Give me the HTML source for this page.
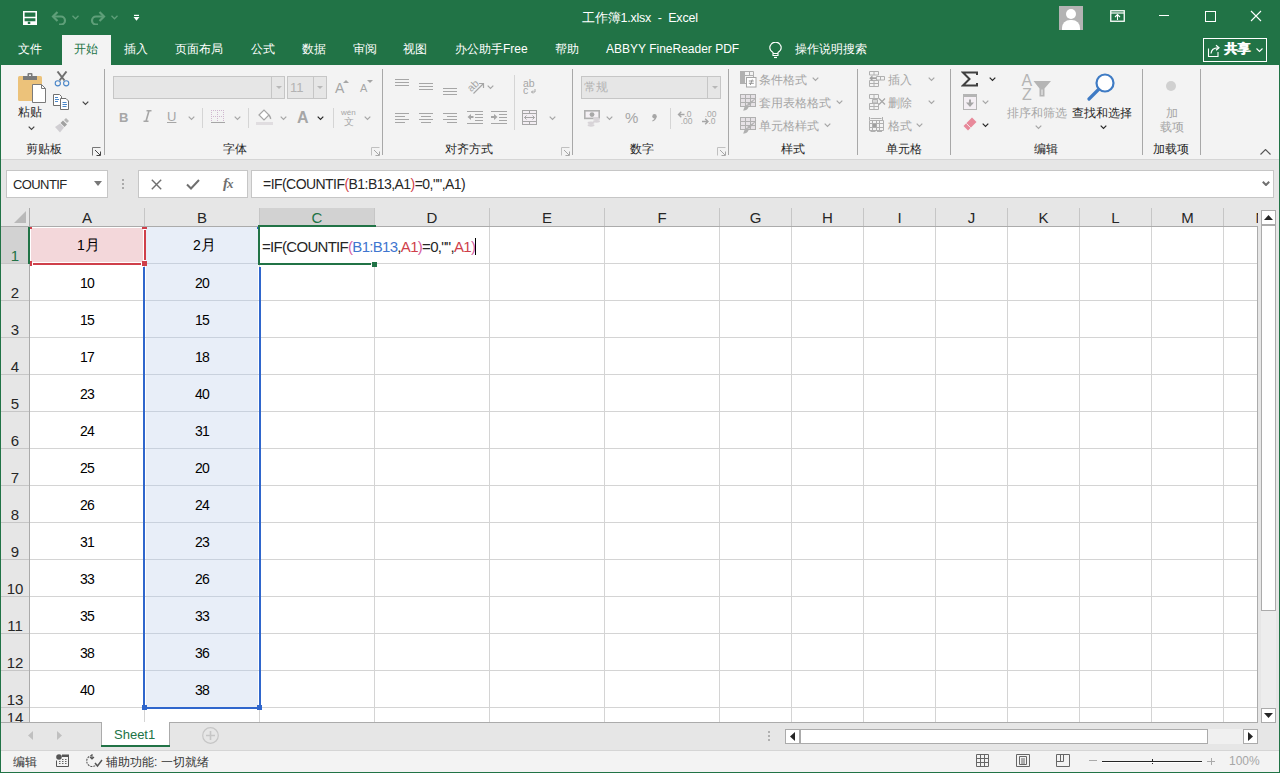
<!DOCTYPE html><html><head><meta charset="utf-8"><style>
*{margin:0;padding:0;box-sizing:border-box}
html,body{width:1280px;height:773px;overflow:hidden;background:#217346;font-family:"Liberation Sans",sans-serif;position:relative}
div,span,svg{position:absolute}
.nw{white-space:nowrap}
.tab{color:#fff;font-size:12px;top:42px;line-height:14px;white-space:nowrap}
.gl{color:#262626;font-size:12px;line-height:14px;white-space:nowrap;top:142px}
.dis{color:#a6a6a6}
.sep{width:1px;background:#c8c8c8}
.hdr{background:#e6e6e6;color:#262626;font-size:15px;text-align:center;line-height:19px}
.cellt{font-size:14px;color:#000;text-align:center;line-height:15px;white-space:nowrap;letter-spacing:-0.8px}
</style></head><body>
<div style="left:0;top:0;width:1280px;height:65px;background:#217346"></div>
<svg style="left:23px;top:11px" width="14" height="14" viewBox="0 0 14 14"><path d="M0 0h14v14H0z M1.6 1.6v4.2h10.8V1.6z M1.6 7.2v3h10.8v-3z M4.8 10.8v2.2h2.5v-2.2z" fill="#fff" fill-rule="evenodd"/></svg>
<svg style="left:51px;top:10px" width="16" height="15" viewBox="0 0 16 15"><path d="M2.5 6.5h7.5a4 4 0 0 1 0 8H8" fill="none" stroke="#5f9f79" stroke-width="2.2"/><path d="M6.5 2L2 6.5l4.5 4.5" fill="none" stroke="#5f9f79" stroke-width="2.2"/></svg>
<svg style="left:72px;top:15px" width="7" height="5" viewBox="0 0 7 5"><path d="M0.5 0.8l3 3 3-3" fill="none" stroke="#5f9f79" stroke-width="1.3"/></svg>
<svg style="left:90px;top:10px" width="16" height="15" viewBox="0 0 16 15"><path d="M13.5 6.5H6a4 4 0 0 0 0 8h2" fill="none" stroke="#5f9f79" stroke-width="2.2"/><path d="M9.5 2L14 6.5 9.5 11" fill="none" stroke="#5f9f79" stroke-width="2.2"/></svg>
<svg style="left:111px;top:15px" width="7" height="5" viewBox="0 0 7 5"><path d="M0.5 0.8l3 3 3-3" fill="none" stroke="#5f9f79" stroke-width="1.3"/></svg>
<svg style="left:133px;top:14px" width="7" height="8" viewBox="0 0 7 8"><rect x="1" y="0.8" width="5" height="1.2" fill="#fff"/><path d="M0.5 3h6l-3 3.8z" fill="#fff"/></svg>
<div class="nw" style="left:582px;top:11px;color:#fff;font-size:12.5px;line-height:15px;letter-spacing:-0.2px">工作簿1.xlsx&nbsp;&nbsp;-&nbsp;&nbsp;Excel</div>
<div style="left:1059px;top:6px;width:24px;height:24px;background:#b3b3b3;overflow:hidden"><div style="left:7px;top:3px;width:10px;height:10px;border-radius:50%;background:#fff"></div><div style="left:3px;top:14px;width:18px;height:14px;border-radius:8px 8px 0 0;background:#fff"></div></div>
<svg style="left:1110px;top:10px" width="15" height="12" viewBox="0 0 15 12"><rect x="0.75" y="0.75" width="13.5" height="10.5" fill="none" stroke="#fff" stroke-width="1.3"/><path d="M1 3h13" stroke="#fff" stroke-width="1.2"/><path d="M7.5 10V5M5 7l2.5-2.5L10 7" fill="none" stroke="#fff" stroke-width="1.1"/></svg>
<div style="left:1159px;top:15px;width:10px;height:1px;background:#fff"></div>
<div style="left:1205px;top:11px;width:11px;height:11px;border:1px solid #fff"></div>
<svg style="left:1250px;top:10px" width="12" height="12" viewBox="0 0 12 12"><path d="M1 1l10 10M11 1L1 11" stroke="#fff" stroke-width="1.1"/></svg>
<div style="left:62px;top:35px;width:49px;height:30px;background:#f3f3f3"></div>
<div class="tab" style="left:18px">文件</div>
<div class="tab" style="left:124px">插入</div>
<div class="tab" style="left:175px">页面布局</div>
<div class="tab" style="left:251px">公式</div>
<div class="tab" style="left:302px">数据</div>
<div class="tab" style="left:353px">审阅</div>
<div class="tab" style="left:403px">视图</div>
<div class="tab" style="left:455px">办公助手Free</div>
<div class="tab" style="left:555px">帮助</div>
<div class="tab" style="left:606px">ABBYY FineReader PDF</div>
<div class="tab" style="left:795px">操作说明搜索</div>
<div class="tab" style="left:74px;color:#217346">开始</div>
<svg style="left:769px;top:42px" width="13" height="17" viewBox="0 0 13 17"><path d="M4 10.5C2 9.3 0.8 7.6 0.8 5.8a5.7 5.7 0 0 1 11.4 0c0 1.8-1.2 3.5-3.2 4.7v3H4z" fill="none" stroke="#fff" stroke-width="1.1"/><path d="M4 11.5h5" stroke="#fff" stroke-width="1"/><path d="M5 15.5h3" stroke="#fff" stroke-width="1.2"/></svg>
<div style="left:1203px;top:38px;width:64px;height:24px;border:1px solid #fff"></div>
<svg style="left:1207px;top:43px" width="14" height="14" viewBox="0 0 14 14"><path d="M1.5 5.5V13.5H11V9" fill="none" stroke="#fff" stroke-width="1.1"/><path d="M4 10.5C4.3 7 6.5 4.8 11 4.8" fill="none" stroke="#fff" stroke-width="1.2"/><path d="M9 2.3l3 2.5-3 2.5" fill="none" stroke="#fff" stroke-width="1.2"/></svg>
<div class="nw" style="left:1224px;top:41px;color:#fff;font-size:13px;font-weight:bold;line-height:15px;text-shadow:0.5px 0 0 #fff">共享</div>
<svg style="left:1256px;top:48px" width="7" height="5" viewBox="0 0 7 5"><path d="M0.5 0.5l3 3 3-3" fill="none" stroke="#fff" stroke-width="1.1"/></svg>
<div style="left:1px;top:65px;width:1278px;height:95px;background:#f3f3f3"></div>
<div style="left:1px;top:159px;width:1278px;height:1px;background:#d5d5d5"></div>
<div class="sep" style="left:104px;top:69px;height:86px;background:#a8a8a8"></div>
<div class="sep" style="left:382px;top:69px;height:86px;background:#a8a8a8"></div>
<div class="sep" style="left:572px;top:69px;height:86px;background:#a8a8a8"></div>
<div class="sep" style="left:728px;top:69px;height:86px;background:#a8a8a8"></div>
<div class="sep" style="left:857px;top:69px;height:86px;background:#a8a8a8"></div>
<div class="sep" style="left:950px;top:69px;height:86px;background:#a8a8a8"></div>
<div class="sep" style="left:1142px;top:69px;height:86px;background:#a8a8a8"></div>
<div class="sep" style="left:1200px;top:69px;height:86px;background:#a8a8a8"></div>
<div class="gl" style="left:26px">剪贴板</div>
<div class="gl" style="left:223px">字体</div>
<div class="gl" style="left:445px">对齐方式</div>
<div class="gl" style="left:630px">数字</div>
<div class="gl" style="left:781px">样式</div>
<div class="gl" style="left:886px">单元格</div>
<div class="gl" style="left:1034px">编辑</div>
<div class="gl" style="left:1153px">加载项</div>
<svg style="left:92px;top:147px" width="9" height="9" viewBox="0 0 9 9"><path d="M0.5 8.5V0.5h8" fill="none" stroke="#777" stroke-width="1"/><path d="M3 3l5 5M4.5 8.5h4v-4" fill="none" stroke="#444" stroke-width="1"/></svg>
<svg style="left:371px;top:147px" width="9" height="9" viewBox="0 0 9 9"><path d="M0.5 8.5V0.5h8" fill="none" stroke="#c0c0c0" stroke-width="1"/><path d="M3 3l5 5M4.5 8.5h4v-4" fill="none" stroke="#a8a8a8" stroke-width="1"/></svg>
<svg style="left:561px;top:147px" width="9" height="9" viewBox="0 0 9 9"><path d="M0.5 8.5V0.5h8" fill="none" stroke="#c0c0c0" stroke-width="1"/><path d="M3 3l5 5M4.5 8.5h4v-4" fill="none" stroke="#a8a8a8" stroke-width="1"/></svg>
<svg style="left:717px;top:147px" width="9" height="9" viewBox="0 0 9 9"><path d="M0.5 8.5V0.5h8" fill="none" stroke="#c0c0c0" stroke-width="1"/><path d="M3 3l5 5M4.5 8.5h4v-4" fill="none" stroke="#a8a8a8" stroke-width="1"/></svg>
<svg style="left:17px;top:72px" width="30" height="32" viewBox="0 0 30 32"><rect x="1" y="4" width="24" height="25" rx="1.5" fill="#ecc27a"/><path d="M6 4h14v4H6z" fill="#7a7a7a"/><rect x="10.5" y="1" width="5" height="4" rx="1" fill="#7a7a7a"/><rect x="12" y="2.5" width="2" height="1.5" fill="#f3f3f3"/><path d="M15.5 12.5h9l4 4v14h-13z" fill="#fff" stroke="#7a7a7a" stroke-width="1"/><path d="M24.5 12.5v4h4" fill="none" stroke="#7a7a7a" stroke-width="1"/></svg>
<div class="nw" style="left:18px;top:105px;font-size:12px;color:#262626;line-height:14px">粘贴</div>
<svg style="left:28px;top:126px" width="7" height="5" viewBox="0 0 7 5"><path d="M0.7 0.7l2.8 2.8 2.8-2.8" fill="none" stroke="#444" stroke-width="1.2"/></svg>
<svg style="left:54px;top:71px" width="16" height="16" viewBox="0 0 16 16"><path d="M3.5 0.5l7 9M12.5 0.5l-7 9" stroke="#6f6f6f" stroke-width="2"/><circle cx="3.8" cy="12.3" r="2.6" fill="none" stroke="#4a86c8" stroke-width="1.1"/><circle cx="12.2" cy="12.3" r="2.6" fill="none" stroke="#4a86c8" stroke-width="1.1"/></svg>
<svg style="left:53px;top:94px" width="17" height="16" viewBox="0 0 17 16"><path d="M0.5 0.5h6l2 2v9h-8z" fill="#fff" stroke="#6f6f6f" stroke-width="1"/><path d="M2 3.5h3M2 5.5h4M2 7.5h3" stroke="#4a86c8" stroke-width="1"/><path d="M7.5 4.5h5.5l2.5 2.5v8.5h-8z" fill="#fff" stroke="#6f6f6f" stroke-width="1"/><path d="M9.5 8.5h4M9.5 10.5h4.5M9.5 12.5h4" stroke="#4a86c8" stroke-width="1"/></svg>
<svg style="left:82px;top:101px" width="7" height="5" viewBox="0 0 7 5"><path d="M0.7 0.7l2.8 2.8 2.8-2.8" fill="none" stroke="#444" stroke-width="1.2"/></svg>
<svg style="left:54px;top:117px" width="17" height="16" viewBox="0 0 17 16"><path d="M12 1l3 3-2 2-3-3z" fill="#b5b5b5"/><path d="M9 3.5l4 4-2.5 2.5-4-4z" fill="#a0a0a0"/><path d="M6 6.5l4 4-4 5L1 10z" fill="#d0ced2"/></svg>
<div style="left:113px;top:76px;width:172px;height:23px;background:#e6e6e6;border:1px solid #c6c6c6"></div>
<div style="left:271px;top:77px;width:1px;height:21px;background:#c6c6c6"></div>
<svg style="left:276px;top:86px" width="6" height="3" viewBox="0 0 6 3"><path d="M0 0h6L3 3z" fill="#b8b8b8"/></svg>
<div style="left:287px;top:76px;width:40px;height:23px;background:#e6e6e6;border:1px solid #c6c6c6"></div>
<div style="left:313px;top:77px;width:1px;height:21px;background:#c6c6c6"></div>
<svg style="left:317px;top:86px" width="6" height="3" viewBox="0 0 6 3"><path d="M0 0h6L3 3z" fill="#b8b8b8"/></svg>
<div class="nw" style="left:290px;top:80px;font-size:13px;color:#b3b3b3;line-height:15px">11</div>
<div class="nw" style="left:335px;top:80px;font-size:14px;color:#a6a6a6;line-height:16px">A</div>
<svg style="left:343px;top:80px" width="6" height="3" viewBox="0 0 6 3"><path d="M0 3h6L3 0z" fill="#a6a6a6"/></svg>
<div class="nw" style="left:360px;top:82px;font-size:11px;color:#a6a6a6;line-height:13px">A</div>
<svg style="left:367px;top:80px" width="6" height="3" viewBox="0 0 6 3"><path d="M0 0h6L3 3z" fill="#a6a6a6"/></svg>
<div class="nw" style="left:119px;top:110px;font-size:13px;font-weight:bold;color:#a6a6a6;line-height:15px">B</div>
<svg style="left:143px;top:110px" width="9" height="12" viewBox="0 0 9 12"><path d="M3.5 0.8h5M0.5 11.2h5M6 0.8L3 11.2" fill="none" stroke="#a6a6a6" stroke-width="1.6"/></svg>
<div class="nw" style="left:167px;top:109px;font-size:13px;color:#a6a6a6;line-height:15px;text-decoration:underline">U</div>
<svg style="left:188px;top:116px" width="7" height="5" viewBox="0 0 7 5"><path d="M0.7 0.7l2.8 2.8 2.8-2.8" fill="none" stroke="#a6a6a6" stroke-width="1.2"/></svg>
<div class="sep" style="left:202px;top:108px;height:20px;background:#d5d5d5"></div>
<svg style="left:211px;top:110px" width="14" height="14" viewBox="0 0 14 14"><g fill="#d0b8d0"><rect x="0" y="0" width="1" height="1"/><rect x="2" y="0" width="1" height="1"/><rect x="4" y="0" width="1" height="1"/><rect x="6" y="0" width="1" height="1"/><rect x="8" y="0" width="1" height="1"/><rect x="10" y="0" width="1" height="1"/><rect x="12" y="0" width="1" height="1"/><rect x="0" y="6" width="1" height="1"/><rect x="2" y="6" width="1" height="1"/><rect x="4" y="6" width="1" height="1"/><rect x="6" y="6" width="1" height="1"/><rect x="8" y="6" width="1" height="1"/><rect x="10" y="6" width="1" height="1"/><rect x="12" y="6" width="1" height="1"/><rect x="0" y="2" width="1" height="1"/><rect x="0" y="4" width="1" height="1"/><rect x="0" y="8" width="1" height="1"/><rect x="0" y="10" width="1" height="1"/><rect x="6" y="2" width="1" height="1"/><rect x="6" y="4" width="1" height="1"/><rect x="6" y="8" width="1" height="1"/><rect x="6" y="10" width="1" height="1"/><rect x="12" y="2" width="1" height="1"/><rect x="12" y="4" width="1" height="1"/><rect x="12" y="8" width="1" height="1"/><rect x="12" y="10" width="1" height="1"/></g><path d="M0 12.5h14" stroke="#a6a6a6" stroke-width="1"/></svg>
<svg style="left:234px;top:116px" width="7" height="5" viewBox="0 0 7 5"><path d="M0.7 0.7l2.8 2.8 2.8-2.8" fill="none" stroke="#a6a6a6" stroke-width="1.2"/></svg>
<div class="sep" style="left:248px;top:108px;height:20px;background:#d5d5d5"></div>
<svg style="left:256px;top:108px" width="17" height="18" viewBox="0 0 17 18"><path d="M3 7l5-5 5 5-5 5z" fill="#fff" stroke="#a6a6a6" stroke-width="1.2"/><path d="M13 7c1 2 2 3 1.5 4" stroke="#a6a6a6" stroke-width="1.5" fill="none"/><rect x="0" y="14" width="17" height="3" fill="#e0dde0"/></svg>
<svg style="left:280px;top:116px" width="7" height="5" viewBox="0 0 7 5"><path d="M0.7 0.7l2.8 2.8 2.8-2.8" fill="none" stroke="#a6a6a6" stroke-width="1.2"/></svg>
<div class="nw" style="left:297px;top:109px;font-size:16px;font-weight:bold;color:#a6a6a6;line-height:18px">A</div>
<svg style="left:317px;top:116px" width="7" height="5" viewBox="0 0 7 5"><path d="M0.7 0.7l2.8 2.8 2.8-2.8" fill="none" stroke="#262626" stroke-width="1.2"/></svg>
<div class="sep" style="left:333px;top:108px;height:20px;background:#d5d5d5"></div>
<div class="nw" style="left:341px;top:108px;font-size:8px;color:#a6a6a6;line-height:9px">wén</div>
<div class="nw" style="left:344px;top:116px;font-size:10px;color:#a6a6a6;line-height:11px">文</div>
<svg style="left:364px;top:116px" width="7" height="5" viewBox="0 0 7 5"><path d="M0.7 0.7l2.8 2.8 2.8-2.8" fill="none" stroke="#a6a6a6" stroke-width="1.2"/></svg>
<div style="left:395px;top:79px;width:14px;height:1px;background:#a6a6a6"></div><div style="left:395px;top:82px;width:14px;height:1px;background:#a6a6a6"></div><div style="left:395px;top:85px;width:14px;height:1px;background:#a6a6a6"></div>
<div style="left:419px;top:83px;width:14px;height:1px;background:#a6a6a6"></div><div style="left:419px;top:86px;width:14px;height:1px;background:#a6a6a6"></div><div style="left:419px;top:89px;width:14px;height:1px;background:#a6a6a6"></div>
<div style="left:443px;top:88px;width:14px;height:1px;background:#a6a6a6"></div><div style="left:443px;top:91px;width:14px;height:1px;background:#a6a6a6"></div><div style="left:443px;top:94px;width:14px;height:1px;background:#a6a6a6"></div>
<svg style="left:466px;top:78px" width="19" height="18" viewBox="0 0 19 18"><text x="1" y="12" font-size="10.5" fill="#a6a6a6" transform="rotate(-45 6 8)" font-family="Liberation Sans">ab</text><path d="M7.5 15.5L17 6M13 5.5h4.5V10" fill="none" stroke="#a6a6a6" stroke-width="1.2"/></svg>
<svg style="left:487px;top:85px" width="7" height="5" viewBox="0 0 7 5"><path d="M0.7 0.7l2.8 2.8 2.8-2.8" fill="none" stroke="#a6a6a6" stroke-width="1.2"/></svg>
<div class="sep" style="left:514px;top:75px;height:55px;background:#d5d5d5"></div>
<svg style="left:523px;top:78px" width="16" height="17" viewBox="0 0 16 17"><text x="0" y="9" font-size="10.5" fill="#a6a6a6" font-family="Liberation Sans">ab</text><text x="0" y="16" font-size="10.5" fill="#a6a6a6" font-family="Liberation Sans">c</text><path d="M12 11v3H8.5M10 12.5l-1.5 1.5 1.5 1.5" fill="none" stroke="#a6a6a6" stroke-width="1"/></svg>
<div style="left:395px;top:113px;width:14px;height:1px;background:#a6a6a6"></div><div style="left:395px;top:116px;width:10px;height:1px;background:#a6a6a6"></div><div style="left:395px;top:119px;width:14px;height:1px;background:#a6a6a6"></div><div style="left:395px;top:122px;width:10px;height:1px;background:#a6a6a6"></div>
<div style="left:419px;top:113px;width:14px;height:1px;background:#a6a6a6"></div><div style="left:421px;top:116px;width:10px;height:1px;background:#a6a6a6"></div><div style="left:419px;top:119px;width:14px;height:1px;background:#a6a6a6"></div><div style="left:421px;top:122px;width:10px;height:1px;background:#a6a6a6"></div>
<div style="left:443px;top:113px;width:14px;height:1px;background:#a6a6a6"></div><div style="left:447px;top:116px;width:10px;height:1px;background:#a6a6a6"></div><div style="left:443px;top:119px;width:14px;height:1px;background:#a6a6a6"></div><div style="left:447px;top:122px;width:10px;height:1px;background:#a6a6a6"></div>
<svg style="left:467px;top:111px" width="16" height="14" viewBox="0 0 16 14"><path d="M0 0.5h16M8 3.5h8M8 6.5h8M8 9.5h8M0 12.5h16" stroke="#a6a6a6" stroke-width="1"/><path d="M6.5 6h-4" stroke="#a6a6a6" stroke-width="2"/><path d="M4 3L0.5 6 4 9z" fill="#a6a6a6"/></svg>
<svg style="left:491px;top:111px" width="16" height="14" viewBox="0 0 16 14"><path d="M0 0.5h16M8 3.5h8M8 6.5h8M8 9.5h8M0 12.5h16" stroke="#a6a6a6" stroke-width="1"/><path d="M0 6h4" stroke="#a6a6a6" stroke-width="2"/><path d="M3 3l3.5 3L3 9z" fill="#a6a6a6"/></svg>
<svg style="left:522px;top:110px" width="15" height="15" viewBox="0 0 15 15"><rect x="0.5" y="0.5" width="14" height="14" fill="#f3eef3" stroke="#a6a6a6" stroke-width="1"/><path d="M0.5 3.5h14M0.5 11.5h14M7.5 0.5v3M7.5 11.5v3" stroke="#a6a6a6" stroke-width="1"/><path d="M2.5 7.5h10M4.5 5.5l-2 2 2 2M10.5 5.5l2 2-2 2" fill="none" stroke="#a6a6a6" stroke-width="1"/></svg>
<svg style="left:549px;top:116px" width="7" height="5" viewBox="0 0 7 5"><path d="M0.7 0.7l2.8 2.8 2.8-2.8" fill="none" stroke="#a6a6a6" stroke-width="1.2"/></svg>
<div style="left:581px;top:76px;width:140px;height:23px;background:#e6e6e6;border:1px solid #c6c6c6"></div>
<div style="left:707px;top:77px;width:1px;height:21px;background:#c6c6c6"></div>
<svg style="left:712px;top:86px" width="6" height="3" viewBox="0 0 6 3"><path d="M0 0h6L3 3z" fill="#b8b8b8"/></svg>
<div class="nw" style="left:584px;top:80px;font-size:12px;color:#b3b3b3;line-height:14px">常规</div>
<svg style="left:584px;top:110px" width="18" height="18" viewBox="0 0 18 18"><rect x="0.8" y="0.8" width="14.4" height="7.6" fill="#f4f0f4" stroke="#b0b0b0" stroke-width="1.6"/><circle cx="8" cy="4.6" r="2.4" fill="#a8a8a8"/><ellipse cx="12.5" cy="8.8" rx="3.5" ry="1.4" fill="#d8d4d8"/><ellipse cx="12.5" cy="11.3" rx="3.5" ry="1.4" fill="#d8d4d8"/><ellipse cx="7" cy="12.8" rx="3.5" ry="1.4" fill="#d8d4d8"/><ellipse cx="7" cy="15.3" rx="3.5" ry="1.4" fill="#d8d4d8"/></svg>
<svg style="left:606px;top:116px" width="7" height="5" viewBox="0 0 7 5"><path d="M0.7 0.7l2.8 2.8 2.8-2.8" fill="none" stroke="#a6a6a6" stroke-width="1.2"/></svg>
<div class="nw" style="left:625px;top:110px;font-size:15px;color:#a6a6a6;line-height:16px">%</div>
<svg style="left:651px;top:114px" width="6" height="8" viewBox="0 0 6 8"><circle cx="3.5" cy="2.3" r="2.2" fill="#a6a6a6"/><path d="M5.5 2.5C5.5 5 4 6.5 1.5 7.5L1.2 6.6C2.8 5.8 3.6 4.8 3.6 3.5z" fill="#a6a6a6"/></svg>
<div class="sep" style="left:670px;top:108px;height:21px;background:#d5d5d5"></div>
<svg style="left:677px;top:110px" width="17" height="15" viewBox="0 0 17 15"><path d="M1.5 4.5h6M4.3 1.7L1.5 4.5l2.8 2.8" fill="none" stroke="#a6a6a6" stroke-width="1.4"/><text x="7.5" y="7" font-size="8.5" font-family="Liberation Sans" fill="#a6a6a6">.0</text><text x="15.5" y="14" font-size="8.5" font-family="Liberation Sans" fill="#a6a6a6" text-anchor="end">.00</text></svg>
<svg style="left:701px;top:110px" width="17" height="15" viewBox="0 0 17 15"><text x="15.5" y="7" font-size="8.5" font-family="Liberation Sans" fill="#a6a6a6" text-anchor="end">.00</text><path d="M1 11.5h6M4.2 8.7L7 11.5l-2.8 2.8" fill="none" stroke="#a6a6a6" stroke-width="1.4"/><text x="7.5" y="14" font-size="8.5" font-family="Liberation Sans" fill="#a6a6a6">.0</text></svg>
<svg style="left:740px;top:71px" width="17" height="17" viewBox="0 0 17 17"><rect x="0" y="0" width="14" height="13" fill="#f3f3f3"/><rect x="0" y="0" width="5" height="13" fill="#b0b0b0"/><path d="M0.5 0.5h13v12h-13zM0 4.5h14M0 8.5h5M9.5 0v5" fill="none" stroke="#b0b0b0"/><rect x="6.5" y="6.5" width="9.5" height="9.5" fill="#fff" stroke="#a6a6a6"/><path d="M8.8 10h5M8.8 12.3h5M12.3 8.5l-2 5.5" stroke="#8a8a8a" stroke-width="0.9"/></svg>
<svg style="left:740px;top:94px" width="17" height="17" viewBox="0 0 17 17"><rect x="0.5" y="0.5" width="15" height="12" fill="#e6e2e6" stroke="#b0b0b0"/><path d="M0.5 4.5h15M0.5 8.5h15M5.5 0.5v12M10.5 0.5v12" stroke="#b0b0b0"/><path d="M16.5 3.5L9 12l-2-2z" fill="#b0b0b0"/><path d="M7 10.5L9 12.5 7.5 15c-1 1-3 1.5-4.5 1.5 1-1.5 1-3 2-4z" fill="#b0b0b0"/></svg>
<svg style="left:740px;top:117px" width="17" height="17" viewBox="0 0 17 17"><rect x="0.5" y="0.5" width="15" height="12" fill="#e6e2e6" stroke="#b0b0b0"/><path d="M0.5 4.5h15M0.5 8.5h15M5.5 0.5v12M10.5 0.5v12" stroke="#b0b0b0"/><path d="M16.5 3.5L9 12l-2-2z" fill="#b0b0b0"/><path d="M7 10.5L9 12.5 7.5 15c-1 1-3 1.5-4.5 1.5 1-1.5 1-3 2-4z" fill="#b0b0b0"/></svg>
<div class="nw dis" style="left:759px;top:73px;font-size:12px;line-height:14px">条件格式</div>
<svg style="left:812px;top:77px" width="7" height="5" viewBox="0 0 7 5"><path d="M0.7 0.7l2.8 2.8 2.8-2.8" fill="none" stroke="#a6a6a6" stroke-width="1.2"/></svg>
<div class="nw dis" style="left:759px;top:96px;font-size:12px;line-height:14px">套用表格格式</div>
<svg style="left:836px;top:100px" width="7" height="5" viewBox="0 0 7 5"><path d="M0.7 0.7l2.8 2.8 2.8-2.8" fill="none" stroke="#a6a6a6" stroke-width="1.2"/></svg>
<div class="nw dis" style="left:759px;top:119px;font-size:12px;line-height:14px">单元格样式</div>
<svg style="left:824px;top:123px" width="7" height="5" viewBox="0 0 7 5"><path d="M0.7 0.7l2.8 2.8 2.8-2.8" fill="none" stroke="#a6a6a6" stroke-width="1.2"/></svg>
<svg style="left:869px;top:71px" width="17" height="17" viewBox="0 0 17 17"><path d="M0.5 0.5h9v3.5h-9zM5 0.5v3.5M0.5 9.5h9v6h-9zM0.5 12.5h9M5 9.5v6M7.5 5.5h8v3.5h-8zM11.5 5.5v3.5" fill="#f3f3f3" stroke="#b0b0b0"/><path d="M7 7.2H2.5" stroke="#a0a0a0" stroke-width="1.8"/><path d="M3.5 4.2L0.3 7.2l3.2 3z" fill="#a0a0a0"/></svg>
<svg style="left:869px;top:94px" width="17" height="17" viewBox="0 0 17 17"><path d="M0.5 0.5h9v4h-9zM5 0.5v4M0.5 9.5h9v6h-9zM0.5 12.5h9M5 9.5v6" fill="#f3f3f3" stroke="#b0b0b0"/><path d="M3.5 5.5h5v3.5h-5z" fill="#d8d8d8" stroke="#b0b0b0"/><path d="M10 4.5l6 6M16 4.5l-6 6" stroke="#a6a6a6" stroke-width="1.2"/></svg>
<svg style="left:869px;top:117px" width="17" height="17" viewBox="0 0 17 17"><path d="M0.5 3.5h14v10h-14zM0.5 6.5h14M0.5 10.5h14M3.5 3.5v10M7.5 3.5v10M10.5 3.5v10" fill="#f3f3f3" stroke="#b0b0b0"/><rect x="4" y="7" width="3" height="3" fill="#a0a0a0"/><path d="M0.5 0v3M13.5 0v3M1.5 1.5h11" stroke="#b0b0b0"/><path d="M1.5 14.5h5M8 14.5h5" stroke="#b0b0b0"/></svg>
<div class="nw dis" style="left:888px;top:73px;font-size:12px;line-height:14px">插入</div>
<svg style="left:928px;top:77px" width="7" height="5" viewBox="0 0 7 5"><path d="M0.7 0.7l2.8 2.8 2.8-2.8" fill="none" stroke="#a6a6a6" stroke-width="1.2"/></svg>
<div class="nw dis" style="left:888px;top:96px;font-size:12px;line-height:14px">删除</div>
<svg style="left:928px;top:100px" width="7" height="5" viewBox="0 0 7 5"><path d="M0.7 0.7l2.8 2.8 2.8-2.8" fill="none" stroke="#a6a6a6" stroke-width="1.2"/></svg>
<div class="nw dis" style="left:888px;top:119px;font-size:12px;line-height:14px">格式</div>
<svg style="left:916px;top:123px" width="7" height="5" viewBox="0 0 7 5"><path d="M0.7 0.7l2.8 2.8 2.8-2.8" fill="none" stroke="#a6a6a6" stroke-width="1.2"/></svg>
<svg style="left:961px;top:71px" width="17" height="16" viewBox="0 0 17 16"><path d="M16 4V1.5H2L8.5 8 2 14.5h14V12" fill="none" stroke="#404040" stroke-width="2"/></svg>
<svg style="left:989px;top:77px" width="7" height="5" viewBox="0 0 7 5"><path d="M0.7 0.7l2.8 2.8 2.8-2.8" fill="none" stroke="#262626" stroke-width="1.2"/></svg>
<svg style="left:963px;top:94px" width="14" height="16" viewBox="0 0 14 16"><rect x="0.5" y="0.5" width="13" height="15" fill="#f4eff4" stroke="#b5b5b5"/><rect x="0.5" y="0.5" width="13" height="2.5" fill="#b5b5b5"/><path d="M7 5.5v6" stroke="#a6a6a6" stroke-width="2"/><path d="M3 8.5l4 4.5 4-4.5z" fill="#a6a6a6"/></svg>
<svg style="left:982px;top:100px" width="7" height="5" viewBox="0 0 7 5"><path d="M0.7 0.7l2.8 2.8 2.8-2.8" fill="none" stroke="#a6a6a6" stroke-width="1.2"/></svg>
<svg style="left:962px;top:117px" width="15" height="14" viewBox="0 0 15 14"><path d="M10 0.5l4.5 4.5-8.5 8.5L1.5 9z" fill="#e8899a"/><path d="M4.2 6.3l4.5 4.5" stroke="#f3f3f3" stroke-width="1"/></svg>
<svg style="left:982px;top:123px" width="7" height="5" viewBox="0 0 7 5"><path d="M0.7 0.7l2.8 2.8 2.8-2.8" fill="none" stroke="#262626" stroke-width="1.2"/></svg>
<svg style="left:1021px;top:73px" width="13" height="28" viewBox="0 0 13 28"><text x="0.5" y="12.5" font-size="16" font-family="Liberation Sans" fill="#b5b5b5">A</text><text x="1" y="26.5" font-size="16" font-family="Liberation Sans" fill="#b5b5b5">Z</text></svg>
<svg style="left:1033px;top:80px" width="19" height="17" viewBox="0 0 19 17"><path d="M0.5 1h17.5l-6.5 7.5v8h-5v-8z" fill="#b5b5b5"/><path d="M8.5 9.5v5.5h1v-5.5z" fill="#f3f3f3"/></svg>
<div class="nw dis" style="left:1007px;top:106px;font-size:12px;line-height:14px">排序和筛选</div>
<svg style="left:1035px;top:125px" width="7" height="5" viewBox="0 0 7 5"><path d="M0.7 0.7l2.8 2.8 2.8-2.8" fill="none" stroke="#a6a6a6" stroke-width="1.2"/></svg>
<svg style="left:1087px;top:72px" width="29" height="29" viewBox="0 0 29 29"><circle cx="18" cy="11" r="8.5" fill="#fff" stroke="#3f7bc4" stroke-width="2.2"/><path d="M11.5 17.5L2 27" stroke="#3f7bc4" stroke-width="3.2" stroke-linecap="round"/></svg>
<div class="nw" style="left:1072px;top:106px;font-size:12px;color:#262626;line-height:14px">查找和选择</div>
<svg style="left:1100px;top:125px" width="7" height="5" viewBox="0 0 7 5"><path d="M0.7 0.7l2.8 2.8 2.8-2.8" fill="none" stroke="#262626" stroke-width="1.2"/></svg>
<div style="left:1166px;top:81px;width:10px;height:10px;border-radius:50%;background:#d0d0d0"></div>
<div class="nw dis" style="left:1166px;top:106px;font-size:12px;line-height:14px">加</div>
<div class="nw dis" style="left:1160px;top:120px;font-size:12px;line-height:14px">载项</div>
<svg style="left:1260px;top:149px" width="11" height="6" viewBox="0 0 11 6"><path d="M0.5 5.5l5-5 5 5" fill="none" stroke="#555" stroke-width="1.1"/></svg>
<div style="left:1px;top:160px;width:1278px;height:48px;background:#e6e6e6"></div>
<div style="left:6px;top:170px;width:102px;height:28px;background:#fff;border:1px solid #c6c6c6"></div>
<div class="nw" style="left:13px;top:177px;font-size:13px;color:#262626;line-height:15px;letter-spacing:-0.6px">COUNTIF</div>
<svg style="left:94px;top:181px" width="8" height="5" viewBox="0 0 8 5"><path d="M0 0h8L4 5z" fill="#777"/></svg>
<div style="left:122px;top:179px;width:2px;height:2px;background:#aaa"></div>
<div style="left:122px;top:183px;width:2px;height:2px;background:#aaa"></div>
<div style="left:122px;top:187px;width:2px;height:2px;background:#aaa"></div>
<div style="left:138px;top:170px;width:110px;height:28px;background:#fff;border:1px solid #c6c6c6"></div>
<svg style="left:151px;top:179px" width="11" height="11" viewBox="0 0 11 11"><path d="M0.8 0.8l9.4 9.4M10.2 0.8L0.8 10.2" stroke="#6f6f6f" stroke-width="1.4"/></svg>
<svg style="left:186px;top:179px" width="14" height="11" viewBox="0 0 14 11"><path d="M1 5.5l4 4L13 1" fill="none" stroke="#6f6f6f" stroke-width="2"/></svg>
<div class="nw" style="left:223px;top:175px;font-size:15px;font-style:italic;font-weight:bold;font-family:'Liberation Serif';color:#6f6f6f;line-height:16px;letter-spacing:-1px">f<span style="position:static;font-size:13px">x</span></div>
<div style="left:251px;top:170px;width:1023px;height:28px;background:#fff;border:1px solid #c6c6c6"></div>
<div class="nw" style="left:263px;top:176px;font-size:14px;color:#262626;line-height:16px;letter-spacing:-0.55px">=IF(COUNTIF<span style="position:static;color:#cf3f4a">(</span>B1:B13,A1<span style="position:static;color:#cf3f4a">)</span>=0,"",A1)</div>
<svg style="left:1262px;top:181px" width="8" height="5" viewBox="0 0 8 5"><path d="M0.8 0.8l3.2 3.2 3.2-3.2" fill="none" stroke="#6f6f6f" stroke-width="2"/></svg>
<div style="left:1px;top:208px;width:1278px;height:514px;background:#e6e6e6"></div>
<div style="left:30px;top:227px;width:1228px;height:495px;background:#fff"></div>
<svg style="left:14px;top:211px" width="12" height="12" viewBox="0 0 12 12"><path d="M12 0v12H0z" fill="#b9b9b9"/></svg>
<div class="hdr" style="left:30px;top:208px;width:114px;height:18px;background:#e6e6e6;color:#262626;overflow:hidden"><span style="position:static;display:block;width:114px">A</span></div>
<div style="left:29px;top:208px;width:1px;height:19px;background:#c6c6c6"></div>
<div class="hdr" style="left:145px;top:208px;width:114px;height:18px;background:#e6e6e6;color:#262626;overflow:hidden"><span style="position:static;display:block;width:114px">B</span></div>
<div style="left:144px;top:208px;width:1px;height:19px;background:#c6c6c6"></div>
<div class="hdr" style="left:260px;top:208px;width:114px;height:18px;background:#d2d2d2;color:#217346;overflow:hidden"><span style="position:static;display:block;width:114px">C</span></div>
<div style="left:259px;top:208px;width:1px;height:19px;background:#c6c6c6"></div>
<div class="hdr" style="left:375px;top:208px;width:114px;height:18px;background:#e6e6e6;color:#262626;overflow:hidden"><span style="position:static;display:block;width:114px">D</span></div>
<div style="left:374px;top:208px;width:1px;height:19px;background:#c6c6c6"></div>
<div class="hdr" style="left:490px;top:208px;width:114px;height:18px;background:#e6e6e6;color:#262626;overflow:hidden"><span style="position:static;display:block;width:114px">E</span></div>
<div style="left:489px;top:208px;width:1px;height:19px;background:#c6c6c6"></div>
<div class="hdr" style="left:605px;top:208px;width:114px;height:18px;background:#e6e6e6;color:#262626;overflow:hidden"><span style="position:static;display:block;width:114px">F</span></div>
<div style="left:604px;top:208px;width:1px;height:19px;background:#c6c6c6"></div>
<div class="hdr" style="left:720px;top:208px;width:71px;height:18px;background:#e6e6e6;color:#262626;overflow:hidden"><span style="position:static;display:block;width:71px">G</span></div>
<div style="left:719px;top:208px;width:1px;height:19px;background:#c6c6c6"></div>
<div class="hdr" style="left:792px;top:208px;width:71px;height:18px;background:#e6e6e6;color:#262626;overflow:hidden"><span style="position:static;display:block;width:71px">H</span></div>
<div style="left:791px;top:208px;width:1px;height:19px;background:#c6c6c6"></div>
<div class="hdr" style="left:864px;top:208px;width:71px;height:18px;background:#e6e6e6;color:#262626;overflow:hidden"><span style="position:static;display:block;width:71px">I</span></div>
<div style="left:863px;top:208px;width:1px;height:19px;background:#c6c6c6"></div>
<div class="hdr" style="left:936px;top:208px;width:71px;height:18px;background:#e6e6e6;color:#262626;overflow:hidden"><span style="position:static;display:block;width:71px">J</span></div>
<div style="left:935px;top:208px;width:1px;height:19px;background:#c6c6c6"></div>
<div class="hdr" style="left:1008px;top:208px;width:71px;height:18px;background:#e6e6e6;color:#262626;overflow:hidden"><span style="position:static;display:block;width:71px">K</span></div>
<div style="left:1007px;top:208px;width:1px;height:19px;background:#c6c6c6"></div>
<div class="hdr" style="left:1080px;top:208px;width:71px;height:18px;background:#e6e6e6;color:#262626;overflow:hidden"><span style="position:static;display:block;width:71px">L</span></div>
<div style="left:1079px;top:208px;width:1px;height:19px;background:#c6c6c6"></div>
<div class="hdr" style="left:1152px;top:208px;width:71px;height:18px;background:#e6e6e6;color:#262626;overflow:hidden"><span style="position:static;display:block;width:71px">M</span></div>
<div style="left:1151px;top:208px;width:1px;height:19px;background:#c6c6c6"></div>
<div class="hdr" style="left:1224px;top:208px;width:34px;height:18px;background:#e6e6e6;color:#262626;overflow:hidden"><span style="position:static;display:block;width:74px">N</span></div>
<div style="left:1223px;top:208px;width:1px;height:19px;background:#c6c6c6"></div>
<div style="left:1px;top:226px;width:1257px;height:1px;background:#ababab"></div>
<div style="left:258px;top:225px;width:118px;height:2px;background:#217346"></div>
<div style="left:1px;top:227px;width:28px;height:37px;background:#d2d2d2;overflow:hidden"><div class="nw" style="left:0;top:20px;width:28px;text-align:center;font-size:15px;line-height:17px;color:#217346">1</div></div>
<div style="left:1px;top:263px;width:28px;height:1px;background:#c6c6c6"></div>
<div style="left:1px;top:264px;width:28px;height:37px;background:#e6e6e6;overflow:hidden"><div class="nw" style="left:0;top:20px;width:28px;text-align:center;font-size:15px;line-height:17px;color:#262626">2</div></div>
<div style="left:1px;top:300px;width:28px;height:1px;background:#c6c6c6"></div>
<div style="left:1px;top:301px;width:28px;height:37px;background:#e6e6e6;overflow:hidden"><div class="nw" style="left:0;top:20px;width:28px;text-align:center;font-size:15px;line-height:17px;color:#262626">3</div></div>
<div style="left:1px;top:337px;width:28px;height:1px;background:#c6c6c6"></div>
<div style="left:1px;top:338px;width:28px;height:37px;background:#e6e6e6;overflow:hidden"><div class="nw" style="left:0;top:20px;width:28px;text-align:center;font-size:15px;line-height:17px;color:#262626">4</div></div>
<div style="left:1px;top:374px;width:28px;height:1px;background:#c6c6c6"></div>
<div style="left:1px;top:375px;width:28px;height:37px;background:#e6e6e6;overflow:hidden"><div class="nw" style="left:0;top:20px;width:28px;text-align:center;font-size:15px;line-height:17px;color:#262626">5</div></div>
<div style="left:1px;top:411px;width:28px;height:1px;background:#c6c6c6"></div>
<div style="left:1px;top:412px;width:28px;height:37px;background:#e6e6e6;overflow:hidden"><div class="nw" style="left:0;top:20px;width:28px;text-align:center;font-size:15px;line-height:17px;color:#262626">6</div></div>
<div style="left:1px;top:448px;width:28px;height:1px;background:#c6c6c6"></div>
<div style="left:1px;top:449px;width:28px;height:37px;background:#e6e6e6;overflow:hidden"><div class="nw" style="left:0;top:20px;width:28px;text-align:center;font-size:15px;line-height:17px;color:#262626">7</div></div>
<div style="left:1px;top:485px;width:28px;height:1px;background:#c6c6c6"></div>
<div style="left:1px;top:486px;width:28px;height:37px;background:#e6e6e6;overflow:hidden"><div class="nw" style="left:0;top:20px;width:28px;text-align:center;font-size:15px;line-height:17px;color:#262626">8</div></div>
<div style="left:1px;top:522px;width:28px;height:1px;background:#c6c6c6"></div>
<div style="left:1px;top:523px;width:28px;height:37px;background:#e6e6e6;overflow:hidden"><div class="nw" style="left:0;top:20px;width:28px;text-align:center;font-size:15px;line-height:17px;color:#262626">9</div></div>
<div style="left:1px;top:559px;width:28px;height:1px;background:#c6c6c6"></div>
<div style="left:1px;top:560px;width:28px;height:37px;background:#e6e6e6;overflow:hidden"><div class="nw" style="left:0;top:20px;width:28px;text-align:center;font-size:15px;line-height:17px;color:#262626">10</div></div>
<div style="left:1px;top:596px;width:28px;height:1px;background:#c6c6c6"></div>
<div style="left:1px;top:597px;width:28px;height:37px;background:#e6e6e6;overflow:hidden"><div class="nw" style="left:0;top:20px;width:28px;text-align:center;font-size:15px;line-height:17px;color:#262626">11</div></div>
<div style="left:1px;top:633px;width:28px;height:1px;background:#c6c6c6"></div>
<div style="left:1px;top:634px;width:28px;height:37px;background:#e6e6e6;overflow:hidden"><div class="nw" style="left:0;top:20px;width:28px;text-align:center;font-size:15px;line-height:17px;color:#262626">12</div></div>
<div style="left:1px;top:670px;width:28px;height:1px;background:#c6c6c6"></div>
<div style="left:1px;top:671px;width:28px;height:37px;background:#e6e6e6;overflow:hidden"><div class="nw" style="left:0;top:20px;width:28px;text-align:center;font-size:15px;line-height:17px;color:#262626">13</div></div>
<div style="left:1px;top:707px;width:28px;height:1px;background:#c6c6c6"></div>
<div style="left:1px;top:708px;width:28px;height:14px;background:#e6e6e6;overflow:hidden"><div class="nw" style="left:0;top:1px;width:28px;text-align:center;font-size:15px;line-height:17px;color:#262626">14</div></div>
<div style="left:29px;top:208px;width:1px;height:514px;background:#ababab"></div>
<div style="left:28px;top:227px;width:2px;height:37px;background:#217346"></div>
<div style="left:144px;top:227px;width:1px;height:495px;background:#d4d4d4"></div>
<div style="left:259px;top:227px;width:1px;height:495px;background:#d4d4d4"></div>
<div style="left:374px;top:227px;width:1px;height:495px;background:#d4d4d4"></div>
<div style="left:489px;top:227px;width:1px;height:495px;background:#d4d4d4"></div>
<div style="left:604px;top:227px;width:1px;height:495px;background:#d4d4d4"></div>
<div style="left:719px;top:227px;width:1px;height:495px;background:#d4d4d4"></div>
<div style="left:791px;top:227px;width:1px;height:495px;background:#d4d4d4"></div>
<div style="left:863px;top:227px;width:1px;height:495px;background:#d4d4d4"></div>
<div style="left:935px;top:227px;width:1px;height:495px;background:#d4d4d4"></div>
<div style="left:1007px;top:227px;width:1px;height:495px;background:#d4d4d4"></div>
<div style="left:1079px;top:227px;width:1px;height:495px;background:#d4d4d4"></div>
<div style="left:1151px;top:227px;width:1px;height:495px;background:#d4d4d4"></div>
<div style="left:1223px;top:227px;width:1px;height:495px;background:#d4d4d4"></div>
<div style="left:30px;top:263px;width:1228px;height:1px;background:#d4d4d4"></div>
<div style="left:30px;top:300px;width:1228px;height:1px;background:#d4d4d4"></div>
<div style="left:30px;top:337px;width:1228px;height:1px;background:#d4d4d4"></div>
<div style="left:30px;top:374px;width:1228px;height:1px;background:#d4d4d4"></div>
<div style="left:30px;top:411px;width:1228px;height:1px;background:#d4d4d4"></div>
<div style="left:30px;top:448px;width:1228px;height:1px;background:#d4d4d4"></div>
<div style="left:30px;top:485px;width:1228px;height:1px;background:#d4d4d4"></div>
<div style="left:30px;top:522px;width:1228px;height:1px;background:#d4d4d4"></div>
<div style="left:30px;top:559px;width:1228px;height:1px;background:#d4d4d4"></div>
<div style="left:30px;top:596px;width:1228px;height:1px;background:#d4d4d4"></div>
<div style="left:30px;top:633px;width:1228px;height:1px;background:#d4d4d4"></div>
<div style="left:30px;top:670px;width:1228px;height:1px;background:#d4d4d4"></div>
<div style="left:30px;top:707px;width:1228px;height:1px;background:#d4d4d4"></div>
<div style="left:30px;top:227px;width:116px;height:38px;background:#fff"></div>
<div style="left:31px;top:228px;width:112px;height:34px;background:#f3d7da"></div>
<div style="left:146px;top:227px;width:112px;height:480px;background:#e8eef8"></div>
<div style="left:146px;top:263px;width:112px;height:1px;background:#c9d1dd"></div>
<div style="left:146px;top:300px;width:112px;height:1px;background:#c9d1dd"></div>
<div style="left:146px;top:337px;width:112px;height:1px;background:#c9d1dd"></div>
<div style="left:146px;top:374px;width:112px;height:1px;background:#c9d1dd"></div>
<div style="left:146px;top:411px;width:112px;height:1px;background:#c9d1dd"></div>
<div style="left:146px;top:448px;width:112px;height:1px;background:#c9d1dd"></div>
<div style="left:146px;top:485px;width:112px;height:1px;background:#c9d1dd"></div>
<div style="left:146px;top:522px;width:112px;height:1px;background:#c9d1dd"></div>
<div style="left:146px;top:559px;width:112px;height:1px;background:#c9d1dd"></div>
<div style="left:146px;top:596px;width:112px;height:1px;background:#c9d1dd"></div>
<div style="left:146px;top:633px;width:112px;height:1px;background:#c9d1dd"></div>
<div style="left:146px;top:670px;width:112px;height:1px;background:#c9d1dd"></div>
<div style="left:260px;top:227px;width:229px;height:36px;background:#fff"></div>
<div class="cellt" style="left:31px;top:237px;width:114px">1<span style="position:static;font-size:15px;margin-left:1px">月</span></div>
<div class="cellt" style="left:147px;top:237px;width:114px">2<span style="position:static;font-size:15px;margin-left:1px">月</span></div>
<div class="cellt" style="left:30px;top:276px;width:114px">10</div>
<div class="cellt" style="left:145px;top:276px;width:114px">20</div>
<div class="cellt" style="left:30px;top:313px;width:114px">15</div>
<div class="cellt" style="left:145px;top:313px;width:114px">15</div>
<div class="cellt" style="left:30px;top:350px;width:114px">17</div>
<div class="cellt" style="left:145px;top:350px;width:114px">18</div>
<div class="cellt" style="left:30px;top:387px;width:114px">23</div>
<div class="cellt" style="left:145px;top:387px;width:114px">40</div>
<div class="cellt" style="left:30px;top:424px;width:114px">24</div>
<div class="cellt" style="left:145px;top:424px;width:114px">31</div>
<div class="cellt" style="left:30px;top:461px;width:114px">25</div>
<div class="cellt" style="left:145px;top:461px;width:114px">20</div>
<div class="cellt" style="left:30px;top:498px;width:114px">26</div>
<div class="cellt" style="left:145px;top:498px;width:114px">24</div>
<div class="cellt" style="left:30px;top:535px;width:114px">31</div>
<div class="cellt" style="left:145px;top:535px;width:114px">23</div>
<div class="cellt" style="left:30px;top:572px;width:114px">33</div>
<div class="cellt" style="left:145px;top:572px;width:114px">26</div>
<div class="cellt" style="left:30px;top:609px;width:114px">35</div>
<div class="cellt" style="left:145px;top:609px;width:114px">33</div>
<div class="cellt" style="left:30px;top:646px;width:114px">38</div>
<div class="cellt" style="left:145px;top:646px;width:114px">36</div>
<div class="cellt" style="left:30px;top:683px;width:114px">40</div>
<div class="cellt" style="left:145px;top:683px;width:114px">38</div>
<div style="left:144px;top:230px;width:2px;height:30px;background:#cf3f4a"></div>
<div style="left:33px;top:263px;width:108px;height:2px;background:#cf3f4a"></div>
<div style="left:30px;top:227px;width:2px;height:2px;background:#cf3f4a"></div>
<div style="left:142px;top:227px;width:5px;height:2px;background:#cf3f4a"></div>
<div style="left:30px;top:261px;width:2px;height:5px;background:#cf3f4a"></div>
<div style="left:142px;top:261px;width:5px;height:5px;background:#cf3f4a"></div>
<div style="left:143px;top:267px;width:2px;height:438px;background:#2f66cc"></div>
<div style="left:259px;top:267px;width:2px;height:438px;background:#2f66cc"></div>
<div style="left:147px;top:707px;width:110px;height:2px;background:#2f66cc"></div>
<div style="left:257px;top:227px;width:3px;height:2px;background:#2f66cc"></div>
<div style="left:142px;top:705px;width:5px;height:5px;background:#2f66cc"></div>
<div style="left:257px;top:705px;width:5px;height:5px;background:#2f66cc"></div>
<div style="left:258px;top:225px;width:2px;height:40px;background:#217346"></div>
<div style="left:258px;top:263px;width:113px;height:2px;background:#217346"></div>
<div style="left:372px;top:262px;width:5px;height:5px;background:#217346"></div>
<div class="nw" style="left:262px;top:238px;font-size:15px;color:#262626;line-height:17px;letter-spacing:-0.7px">=IF(COUNTIF<span style="position:static;color:#d6609f">(</span><span style="position:static;color:#3f76cf">B1:B13</span>,<span style="position:static;color:#cf3f4a">A1</span><span style="position:static;color:#d6609f">)</span>=0,"",<span style="position:static;color:#cf3f4a">A1</span><span style="position:static;color:#d6609f">)</span></div>
<div style="left:475px;top:238px;width:1px;height:17px;background:#000"></div>
<div style="left:1257px;top:226px;width:1px;height:496px;background:#ababab"></div>
<div style="left:1258px;top:208px;width:21px;height:514px;background:#e6e6e6"></div>
<div style="left:1261px;top:225px;width:15px;height:483px;background:#ededed"></div>
<div style="left:1261px;top:210px;width:15px;height:15px;background:#fff;border:1px solid #ababab"></div>
<svg style="left:1264px;top:215px" width="9" height="5" viewBox="0 0 9 5"><path d="M0 5h9L4.5 0z" fill="#262626"/></svg>
<div style="left:1261px;top:225px;width:15px;height:386px;background:#fff;border:1px solid #ababab"></div>
<div style="left:1261px;top:708px;width:15px;height:15px;background:#fff;border:1px solid #ababab"></div>
<svg style="left:1264px;top:713px" width="9" height="5" viewBox="0 0 9 5"><path d="M0 0h9L4.5 5z" fill="#262626"/></svg>
<div style="left:1px;top:722px;width:1278px;height:28px;background:#e6e6e6"></div>
<div style="left:1px;top:722px;width:1257px;height:1px;background:#ababab"></div>
<svg style="left:28px;top:731px" width="5" height="9" viewBox="0 0 5 9"><path d="M5 0v9L0 4.5z" fill="#c0c0c0"/></svg>
<svg style="left:57px;top:731px" width="5" height="9" viewBox="0 0 5 9"><path d="M0 0v9l5-4.5z" fill="#c0c0c0"/></svg>
<div style="left:101px;top:722px;width:69px;height:25px;background:#fff;border:1px solid #ababab;border-top:none"></div>
<div style="left:101px;top:745px;width:69px;height:2px;background:#217346"></div>
<div class="nw" style="left:114px;top:727px;font-size:13px;color:#217346;line-height:15px">Sheet1</div>
<svg style="left:202px;top:727px" width="17" height="17" viewBox="0 0 17 17"><circle cx="8.5" cy="8.5" r="7.8" fill="none" stroke="#c6c6c6" stroke-width="1.2"/><path d="M8.5 4v9M4 8.5h9" stroke="#c6c6c6" stroke-width="1.6"/></svg>
<div style="left:768px;top:731px;width:2px;height:2px;background:#b0b0b0"></div>
<div style="left:768px;top:735px;width:2px;height:2px;background:#b0b0b0"></div>
<div style="left:768px;top:739px;width:2px;height:2px;background:#b0b0b0"></div>
<div style="left:785px;top:729px;width:473px;height:15px;background:#f0f0f0"></div>
<div style="left:785px;top:729px;width:15px;height:15px;background:#fff;border:1px solid #ababab"></div>
<svg style="left:790px;top:732px" width="5" height="9" viewBox="0 0 5 9"><path d="M5 0v9L0 4.5z" fill="#262626"/></svg>
<div style="left:800px;top:729px;width:408px;height:15px;background:#fff;border:1px solid #ababab"></div>
<div style="left:1243px;top:729px;width:15px;height:15px;background:#fff;border:1px solid #ababab"></div>
<svg style="left:1248px;top:732px" width="5" height="9" viewBox="0 0 5 9"><path d="M0 0v9l5-4.5z" fill="#262626"/></svg>
<div style="left:1261px;top:722px;width:15px;height:1px;background:#ababab"></div>
<div style="left:1px;top:750px;width:1278px;height:22px;background:#f3f3f3;border-top:1px solid #d5d5d5"></div>
<div class="nw" style="left:13px;top:755px;font-size:12px;color:#333;line-height:14px">编辑</div>
<svg style="left:56px;top:754px" width="13" height="13" viewBox="0 0 13 13"><circle cx="3" cy="3" r="2.8" fill="#555"/><rect x="6" y="0.5" width="7" height="2.5" fill="#555"/><path d="M12.5 3v9.5H0.5V6.5" fill="none" stroke="#555"/><g fill="#666"><rect x="3" y="7" width="1.5" height="1"/><rect x="6" y="7" width="1.5" height="1"/><rect x="9" y="7" width="1.5" height="1"/><rect x="3" y="9" width="1.5" height="1"/><rect x="6" y="9" width="1.5" height="1"/><rect x="9" y="9" width="1.5" height="1"/><rect x="6" y="5" width="1.5" height="1"/><rect x="9" y="5" width="1.5" height="1"/></g></svg>
<svg style="left:86px;top:754px" width="17" height="14" viewBox="0 0 17 14"><path d="M6 1.5A5.5 5.5 0 1 0 10 11" fill="none" stroke="#555" stroke-width="1.1" stroke-dasharray="2 1"/><path d="M6 0v5M4 3l2 2 2-2" fill="none" stroke="#555" stroke-width="1.1"/><path d="M9 9l2.5 3L16 6" fill="none" stroke="#555" stroke-width="1.5"/></svg>
<div class="nw" style="left:106px;top:755px;font-size:12px;color:#333;line-height:14px">辅助功能: 一切就绪</div>
<svg style="left:976px;top:754px" width="13" height="13" viewBox="0 0 13 13"><path d="M0.5 0.5h12v12h-12zM4.5 0.5v12M8.5 0.5v12M0.5 4.5h12M0.5 8.5h12" fill="none" stroke="#666"/></svg>
<svg style="left:1016px;top:754px" width="14" height="13" viewBox="0 0 14 13"><path d="M0.5 0.5h13v12h-13z" fill="none" stroke="#666"/><path d="M3.5 2.5h7v8h-7zM5 5h4M5 7h4M5 9h4" fill="none" stroke="#666"/></svg>
<svg style="left:1056px;top:754px" width="14" height="13" viewBox="0 0 14 13"><path d="M0.5 0.5h13v12h-13zM0.5 7.5h7v-7M4.5 0.5v7" fill="none" stroke="#666"/></svg>
<div style="left:1089px;top:760px;width:8px;height:1px;background:#aaa"></div>
<div style="left:1102px;top:761px;width:100px;height:1px;background:#262626"></div>
<div style="left:1152px;top:759px;width:1px;height:5px;background:#262626"></div>
<div style="left:1102px;top:762px;width:100px;height:1px;background:#fff"></div>
<div style="left:1207px;top:761px;width:8px;height:1px;background:#aaa"></div>
<div style="left:1211px;top:758px;width:1px;height:7px;background:#aaa"></div>
<div class="nw" style="left:1229px;top:754px;font-size:12px;color:#a6a6a6;line-height:14px">100%</div></body></html>
